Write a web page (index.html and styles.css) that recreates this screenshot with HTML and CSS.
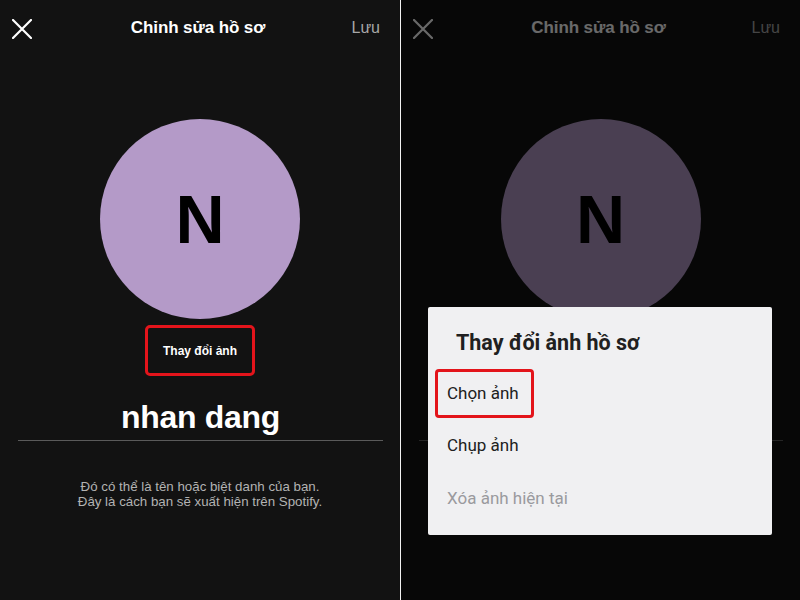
FILE: index.html
```html
<!DOCTYPE html>
<html lang="vi">
<head>
  <meta charset="UTF-8">
  <title>Chỉnh sửa hồ sơ</title>
  <link rel="stylesheet" href="styles.css">
</head>
<body>

<div class="page">

  <!-- edit profile screen -->
  <div class="screen">
    <div class="topbar">
      <svg class="close" width="20" height="20" viewBox="0 0 20 20">
        <path d="M1 1L19 19M19 1L1 19" stroke="currentColor" stroke-width="2.2" stroke-linecap="round"/>
      </svg>
      <div class="title">Chỉnh sửa hồ sơ</div>
      <div class="save">Lưu</div>
    </div>
    <div class="avatar">N</div>
    <div class="change-photo marked">Thay đổi ảnh</div>
    <div class="name">nhan dang</div>
    <p class="hint">Đó có thể là tên hoặc biệt danh của bạn.<br>Đây là cách bạn sẽ xuất hiện trên Spotify.</p>
  </div>

  <!-- same screen with the photo picker open (rest of the form sits under the sheet) -->
  <div class="screen second">
    <div class="topbar">
      <svg class="close" width="20" height="20" viewBox="0 0 20 20">
        <path d="M1 1L19 19M19 1L1 19" stroke="currentColor" stroke-width="2.2" stroke-linecap="round"/>
      </svg>
      <div class="title">Chỉnh sửa hồ sơ</div>
      <div class="save">Lưu</div>
    </div>
    <div class="avatar">N</div>
    <div class="change-photo"></div>
    <div class="name"></div>

    <div class="dim"></div>
    <div class="dialog">
      <h3>Thay đổi ảnh hồ sơ</h3>
      <div class="option marked">Chọn ảnh</div>
      <div class="option">Chụp ảnh</div>
      <div class="option disabled">Xóa ảnh hiện tại</div>
    </div>
  </div>

</div>

</body>
</html>
```

FILE: styles.css
```css
body {
  margin: 0;
  background: #121212;
  font-family: 'Liberation Sans', Arial, sans-serif;
}
.page {
  display: flex;
  width: 800px;
  height: 600px;
  overflow: hidden;
}
.screen {
  position: relative;
  width: 400px;
  height: 600px;
  background: #121212;
  color: #fff;
  flex-shrink: 0;
}
.screen.second {
  width: 399px;
  border-left: 1px solid #f2f2f2;
}
.topbar {
  display: grid;
  grid-template-columns: 1fr auto 1fr;
  align-items: center;
  height: 56px;
  padding: 0 20px 0 12px;
}
.close {
  color: #fff;
  margin-top: 1px;
}
.title {
  font-size: 17px;
  font-weight: bold;
  letter-spacing: -0.1px;
  margin-left: 4px;
}
.save {
  justify-self: end;
  font-size: 16px;
  color: #a7a7a7;
}
.avatar {
  width: 200px;
  height: 200px;
  margin: 63px auto 0;
  border-radius: 50%;
  background: #b49ac8;
  color: #000;
  display: flex;
  align-items: center;
  justify-content: center;
  font-size: 68px;
  font-weight: bold;
}
.change-photo {
  box-sizing: border-box;
  width: 110px;
  height: 51px;
  margin: 6px auto 0;
  border: 3px solid transparent;
  border-radius: 5px;
  display: flex;
  align-items: center;
  justify-content: center;
  font-size: 12px;
  font-weight: bold;
}
.change-photo.marked,
.option.marked {
  border: 3px solid #e3141b;
}
.name {
  margin: 21px 17px 0 18px;
  height: 43px;
  line-height: 40px;
  border-bottom: 1px solid #5a5a5a;
  text-align: center;
  font-size: 32px;
  font-weight: bold;
  letter-spacing: -0.3px;
}
.hint {
  margin: 38px 0 0;
  text-align: center;
  font-size: 13.3px;
  line-height: 15px;
  color: #b3b3b3;
}
.dim {
  position: absolute;
  inset: 0;
  background: rgba(0, 0, 0, 0.59);
}
.dialog {
  position: absolute;
  left: 27px;
  top: 307px;
  width: 344px;
  height: 228px;
  background: #f0f0f2;
  border-radius: 2px;
  font-family: Roboto, 'Liberation Sans', sans-serif;
  color: #202020;
}
.dialog h3 {
  margin: 22px 0 0 28px;
  font-size: 21.5px;
  line-height: 28px;
  font-weight: bold;
}
.option {
  font-size: 17px;
  line-height: 25px;
  padding: 0 0 0 19px;
  height: 53px;
  display: flex;
  align-items: center;
}
.option.marked {
  box-sizing: border-box;
  width: 99px;
  height: 49px;
  margin: 12px 0 1px 7px;
  padding-left: 9px;
  border-radius: 4px;
}
.option.disabled {
  color: #9a9a9e;
}
```
